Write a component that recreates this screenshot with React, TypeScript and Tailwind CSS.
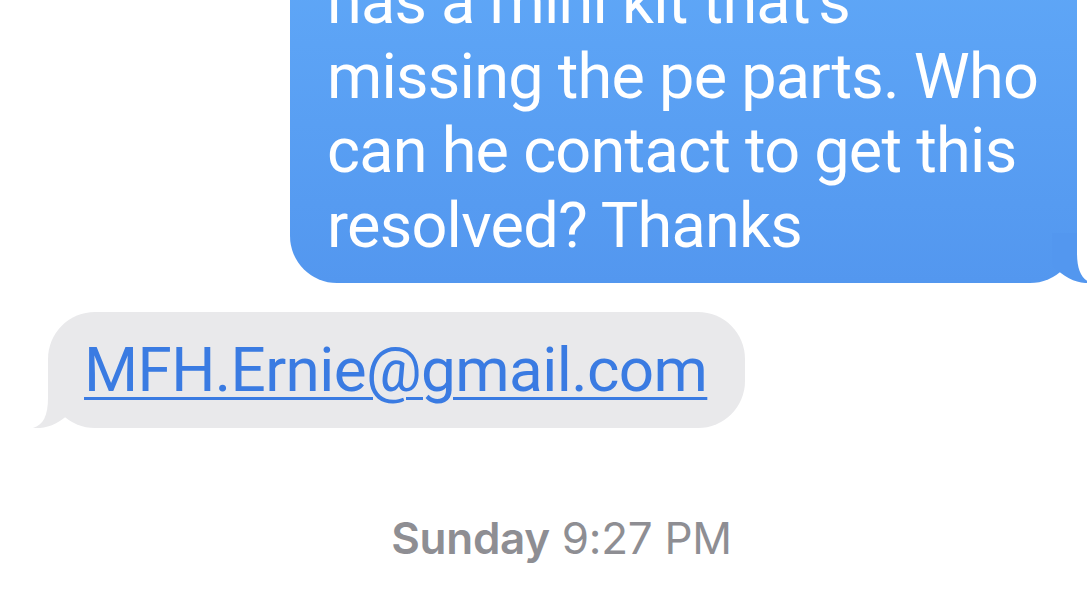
import React from "react";

function Tail({ color, flip }: { color: string; flip?: boolean }) {
  return (
    <svg
      width="70"
      height="50"
      viewBox="0 0 70 50"
      className={
        flip
          ? "absolute left-[-23px] bottom-0 -scale-x-100"
          : "absolute right-[-23px] bottom-0"
      }
    >
      <path
        d="M22 0 L47 0 L47 20 C47 38 52 47 62 50 C50 51 36 47 22 32 Z"
        fill={color}
      />
    </svg>
  );
}

export default function App() {
  const lines = [
    "has a mini kit that’s",
    "missing the pe parts. Who",
    "can he contact to get this",
    "resolved? Thanks",
  ];
  return (
    <div className="w-[1087px] h-[604px] bg-white overflow-hidden font-['Inter','Liberation_Sans',sans-serif]">
      <div className="flex justify-end pr-[10px] mt-[-115px]">
        <div className="relative w-[787px] rounded-[47px] bg-gradient-to-b from-[#62abf9] to-[#5397ef] pt-[80px] pb-[20px] pl-[37px] text-white font-['Roboto','Inter',sans-serif] text-[63px] leading-[74.5px] tracking-[-0.75px]">
          {lines.map((l) => (
            <div key={l} className="whitespace-nowrap">
              {l}
            </div>
          ))}
          <Tail color="#5397ef" />
        </div>
      </div>
      <div className="flex mt-[29px] pl-[48px]">
        <div className="relative rounded-[47px] bg-[#e9e9eb] pt-[20px] pb-[21px] pl-[36px] pr-[38px] font-['Roboto','Inter',sans-serif] text-[62px] leading-[75px] tracking-[-0.6px]">
          <span className="text-[#3a7be2] underline decoration-[3px] underline-offset-[6px] whitespace-nowrap">
            MFH.Ernie@gmail.com
          </span>
          <Tail color="#e9e9eb" flip />
        </div>
      </div>
      <div className="mt-[83px] flex justify-center pl-[36px] text-[44px] leading-[54px] tracking-[-0.3px] text-[#8e8e93]">
        <span className="font-semibold">Sunday</span>
        <span className="ml-[12px]">9:27 PM</span>
      </div>
    </div>
  );
}
